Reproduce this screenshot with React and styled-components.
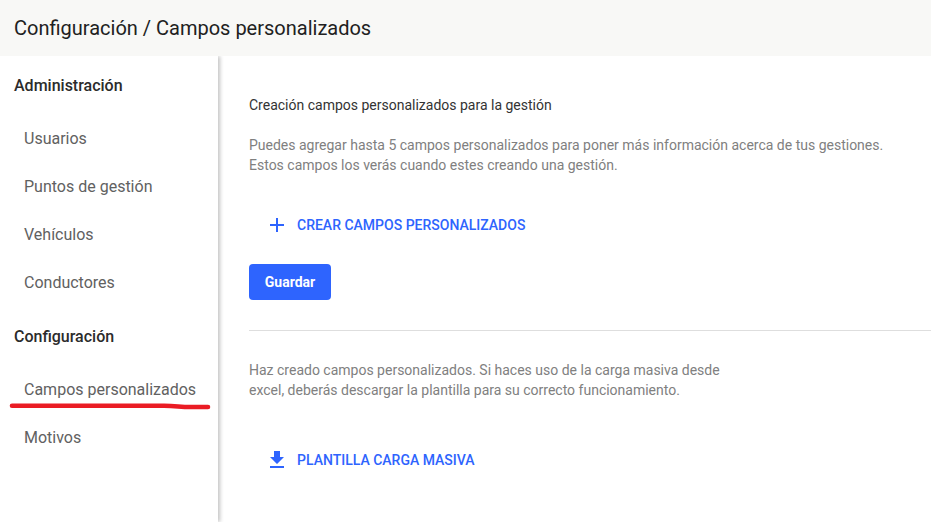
import React from "react";
import styled, { createGlobalStyle } from "styled-components";

const Global = createGlobalStyle`
  html, body { margin: 0; padding: 0; background: #fff; }
  body { font-family: Roboto, "Liberation Sans", sans-serif; overflow: hidden; }
  * { box-sizing: border-box; }
`;

const Page = styled.div`
  width: 931px;
  height: 522px;
  display: flex;
  flex-direction: column;
  overflow: hidden;
`;

const Header = styled.header`
  position: relative;
  z-index: 1;
  height: 56px;
  flex: none;
  display: flex;
  align-items: center;
  padding-left: 14px;
  background: #f8f8f6;
  font-size: 20px;
  color: #212121;
`;

const Body = styled.div`
  flex: 1;
  display: flex;
  min-height: 0;
`;

const Sidebar = styled.aside`
  position: relative;
  width: 218px;
  flex: none;
  background: #fff;
  box-shadow: 2px 0 4px rgba(0, 0, 0, 0.24);
`;

const SectionTitle = styled.div`
  height: ${(p) => p.$h}px;
  padding-top: ${(p) => p.$pt || 0}px;
  display: flex;
  align-items: center;
  padding-left: 14px;
  font-size: 16px;
  font-weight: 500;
  color: #2b2b2b;
`;

const NavItem = styled.div`
  position: relative;
  height: 48px;
  display: flex;
  align-items: center;
  padding-left: 24px;
  font-size: 16px;
  color: #616161;
`;

const Scribble = styled.svg`
  position: absolute;
  left: 9px;
  top: 37px;
  width: 203px;
  height: 10px;
`;

const Main = styled.main`
  flex: 1;
  min-width: 0;
  padding-top: 39px;
  padding-left: 31px;
`;

const Lead = styled.p`
  margin: 0 0 20px;
  font-size: 14px;
  line-height: 20px;
  color: #333;
`;

const Help = styled.p`
  margin: 0;
  font-size: 14px;
  line-height: 20px;
  color: #808080;
`;

const LinkButton = styled.div`
  height: 24px;
  display: flex;
  align-items: center;
  gap: 8px;
  padding-left: 16px;
  margin-top: ${(p) => p.$top}px;
  font-size: 14px;
  font-weight: 500;
  color: #2e64fe;
  svg { display: block; flex: none; }
`;

const SaveButton = styled.div`
  width: 82px;
  height: 36px;
  margin-top: 27px;
  display: flex;
  align-items: center;
  justify-content: center;
  border-radius: 4px;
  background: #2e64fe;
  color: #fff;
  font-size: 14px;
  font-weight: 700;
`;

const Divider = styled.hr`
  border: 0;
  height: 1px;
  margin: 30px 0 29px;
  background: #dedede;
`;

export default function App() {
  return (
    <Page>
      <Global />
      <Header>Configuración / Campos personalizados</Header>
      <Body>
        <Sidebar>
          <SectionTitle $h={58}>Administración</SectionTitle>
          <NavItem>Usuarios</NavItem>
          <NavItem>Puntos de gestión</NavItem>
          <NavItem>Vehículos</NavItem>
          <NavItem>Conductores</NavItem>
          <SectionTitle $h={59} $pt={2}>Configuración</SectionTitle>
          <NavItem>
            Campos personalizados
            <Scribble viewBox="0 0 203 10" fill="none">
              <path d="M3 3.8 L 155 3.8 C 168 3.8, 170 5, 182 5 L 199 5" stroke="#ea1c24" strokeWidth="4.6" strokeLinecap="round" />
            </Scribble>
          </NavItem>
          <NavItem>Motivos</NavItem>
        </Sidebar>
        <Main>
          <Lead>Creación campos personalizados para la gestión</Lead>
          <Help>
            Puedes agregar hasta 5 campos personalizados para poner más información acerca de tus gestiones.
            <br />
            Estos campos los verás cuando estes creando una gestión.
          </Help>
          <LinkButton $top={38}>
            <svg width="24" height="24" viewBox="0 0 24 24" fill="#2e64fe"><path d="M19 13h-6v6h-2v-6H5v-2h6V5h2v6h6v2z" /></svg>
            CREAR CAMPOS PERSONALIZADOS
          </LinkButton>
          <SaveButton>Guardar</SaveButton>
          <Divider />
          <Help>
            Haz creado campos personalizados. Si haces uso de la carga masiva desde
            <br />
            excel, deberás descargar la plantilla para su correcto funcionamiento.
          </Help>
          <LinkButton $top={48}>
            <svg width="24" height="24" viewBox="0 0 24 24" fill="#2e64fe"><path d="M19 9h-4V3H9v6H5l7 7 7-7zM5 18v2h14v-2H5z" /></svg>
            PLANTILLA CARGA MASIVA
          </LinkButton>
        </Main>
      </Body>
    </Page>
  );
}
